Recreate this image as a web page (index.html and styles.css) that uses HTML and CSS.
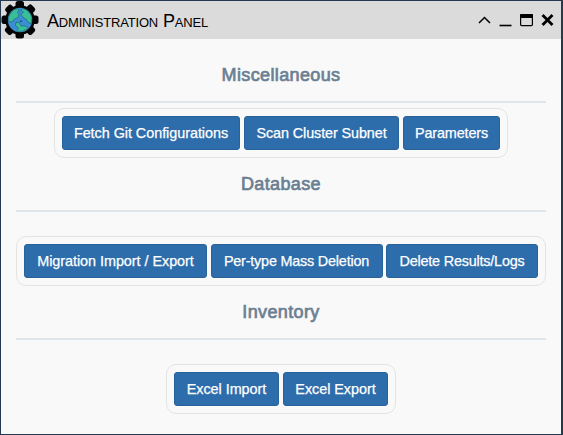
FILE: index.html
```
<!DOCTYPE html>
<html lang="en">
<head>
<meta charset="utf-8">
<title>Administration Panel</title>
<link rel="stylesheet" href="styles.css">
</head>
<body>
<main class="window">
  <header class="titlebar">
    <svg class="logo" width="38" height="38" viewBox="0 0 38 38">
      <g fill="#050505">
        <g id="teeth"><rect x="14.500" y="0" width="8.500" height="37.500" rx="2.500"/><rect x="0.500" y="14.500" width="37" height="8.500" rx="2.500"/></g>
        <use href="#teeth" transform="rotate(45 19 19)"/>
        <circle cx="19" cy="19" r="14.800"/>
      </g>
      <circle cx="19" cy="19" r="12.200" fill="#3a8ed4"/>
      <g fill="#38bf98" stroke="#205c70" stroke-width=".6" stroke-linejoin="round">
        <path d="M9.500 12.500Q12 8 16.500 7.500L18 9.500 16.500 11.500 18 13.500 17 16.500 13.500 18 11 21 7.500 20.500Q6.500 16 9.500 12.500Z"/>
        <path d="M21.500 7.500Q29 9.500 31 17L30 22.500 27 21.500 25.500 18.500 22 16.500 20 13.500 22.500 11 20 9Z"/>
        <path d="M15 21.500L18 21.500 20 25 24 25 27.500 27Q22 31.500 15.500 30.500L17.500 27 14.500 24.500Z"/>
      </g>
      <path d="M19.300 19.500h1.500v1.500h-1.500z" fill="#173f5c"/>
    </svg>
    <h1 class="title">Administration Panel</h1>
    <div class="controls">
      <svg width="13" height="14" viewBox="0 0 13 14"><path d="M1 10L6.500 4.500 12 10" fill="none" stroke="#000" stroke-width="1.500"/></svg>
      <svg width="13" height="14" viewBox="0 0 13 14"><path d="M.5 12.500h12" stroke="#000" stroke-width="1.600"/></svg>
      <svg width="13" height="14" viewBox="0 0 13 14"><rect x=".6" y="1.600" width="11.800" height="11" rx="1" fill="none" stroke="#000" stroke-width="1.200"/><path d="M0 2q0-1 1-1h11q1 0 1 1v3H0z"/></svg>
      <svg width="13" height="14" viewBox="0 0 13 14"><path d="M1.500 2L11.500 12M11.500 2L1.500 12" stroke="#000" stroke-width="2.800"/></svg>
    </div>
  </header>
  <section class="section compact">
    <h2 class="heading">Miscellaneous</h2>
    <div class="group">
      <button class="btn fetch">Fetch Git Configurations</button>
      <button class="btn scan">Scan Cluster Subnet</button>
      <button class="btn params">Parameters</button>
    </div>
  </section>
  <section class="section">
    <h2 class="heading">Database</h2>
    <div class="group full">
      <button class="btn migrate">Migration Import / Export</button>
      <button class="btn mass">Per-type Mass Deletion</button>
      <button class="btn logs">Delete Results/Logs</button>
    </div>
  </section>
  <section class="section">
    <h2 class="heading">Inventory</h2>
    <div class="group">
      <button class="btn excel">Excel Import</button>
      <button class="btn excel">Excel Export</button>
    </div>
  </section>
</main>
</body>
</html>
```
FILE: styles.css
```
* { box-sizing: border-box; }
body { margin: 0; font-family: "Liberation Sans", Arial, sans-serif; }
.window {
  height: 435px;
  border: 1px solid #253a50;
  border-right-width: 2px;
  background: #f9f9f9;
}
.titlebar {
  display: flex;
  align-items: center;
  height: 38px;
  padding-right: 7px;
  background: #dbdbdb;
}
.title {
  margin: 1px 0 0 8px;
  font-size: 18px;
  font-weight: 400;
  font-variant: small-caps;
  letter-spacing: -.18px;
  line-height: 24px;
  color: #000;
}
.controls { display: flex; gap: 8px; margin-left: auto; }
.controls svg { display: block; }
.section {
  display: flex;
  flex-direction: column;
  align-items: center;
  padding: 0 15px;
}
.section.compact { padding-top: 10px; }
.heading {
  width: 100%;
  height: 54px;
  margin: 0;
  padding-top: 14px;
  border-bottom: 2px solid #e0e5e9;
  font-size: 18px;
  font-weight: 400;
  letter-spacing: .37px;
  line-height: 24px;
  text-align: center;
  color: #6b7f93;
  -webkit-text-stroke: .7px #6b7f93;
}
.group {
  display: flex;
  gap: 4px;
  margin-top: 24px;
  padding: 7px;
  border: 1px solid #e4e4e4;
  border-radius: 10px;
}
.compact .group { margin-top: 5px; }
.full { gap: 3.5px; }
.btn {
  height: 34px;
  padding: 0;
  border: 1px solid #28629a;
  border-radius: 3px;
  background: #2e6dac;
  color: #fff;
  font: 14.4px/20px "Liberation Sans", Arial, sans-serif;
  letter-spacing: -.04px;
  white-space: nowrap;
  -webkit-text-stroke: .25px #fff;
}
.fetch { width: 178px; }
.scan { width: 155px; letter-spacing: -.1px; }
.params { width: 97px; letter-spacing: -.15px; }
.migrate { width: 183px; }
.mass { width: 172px; letter-spacing: -.2px; }
.logs { width: 152px; letter-spacing: -.2px; }
.excel { width: 105px; }
```
